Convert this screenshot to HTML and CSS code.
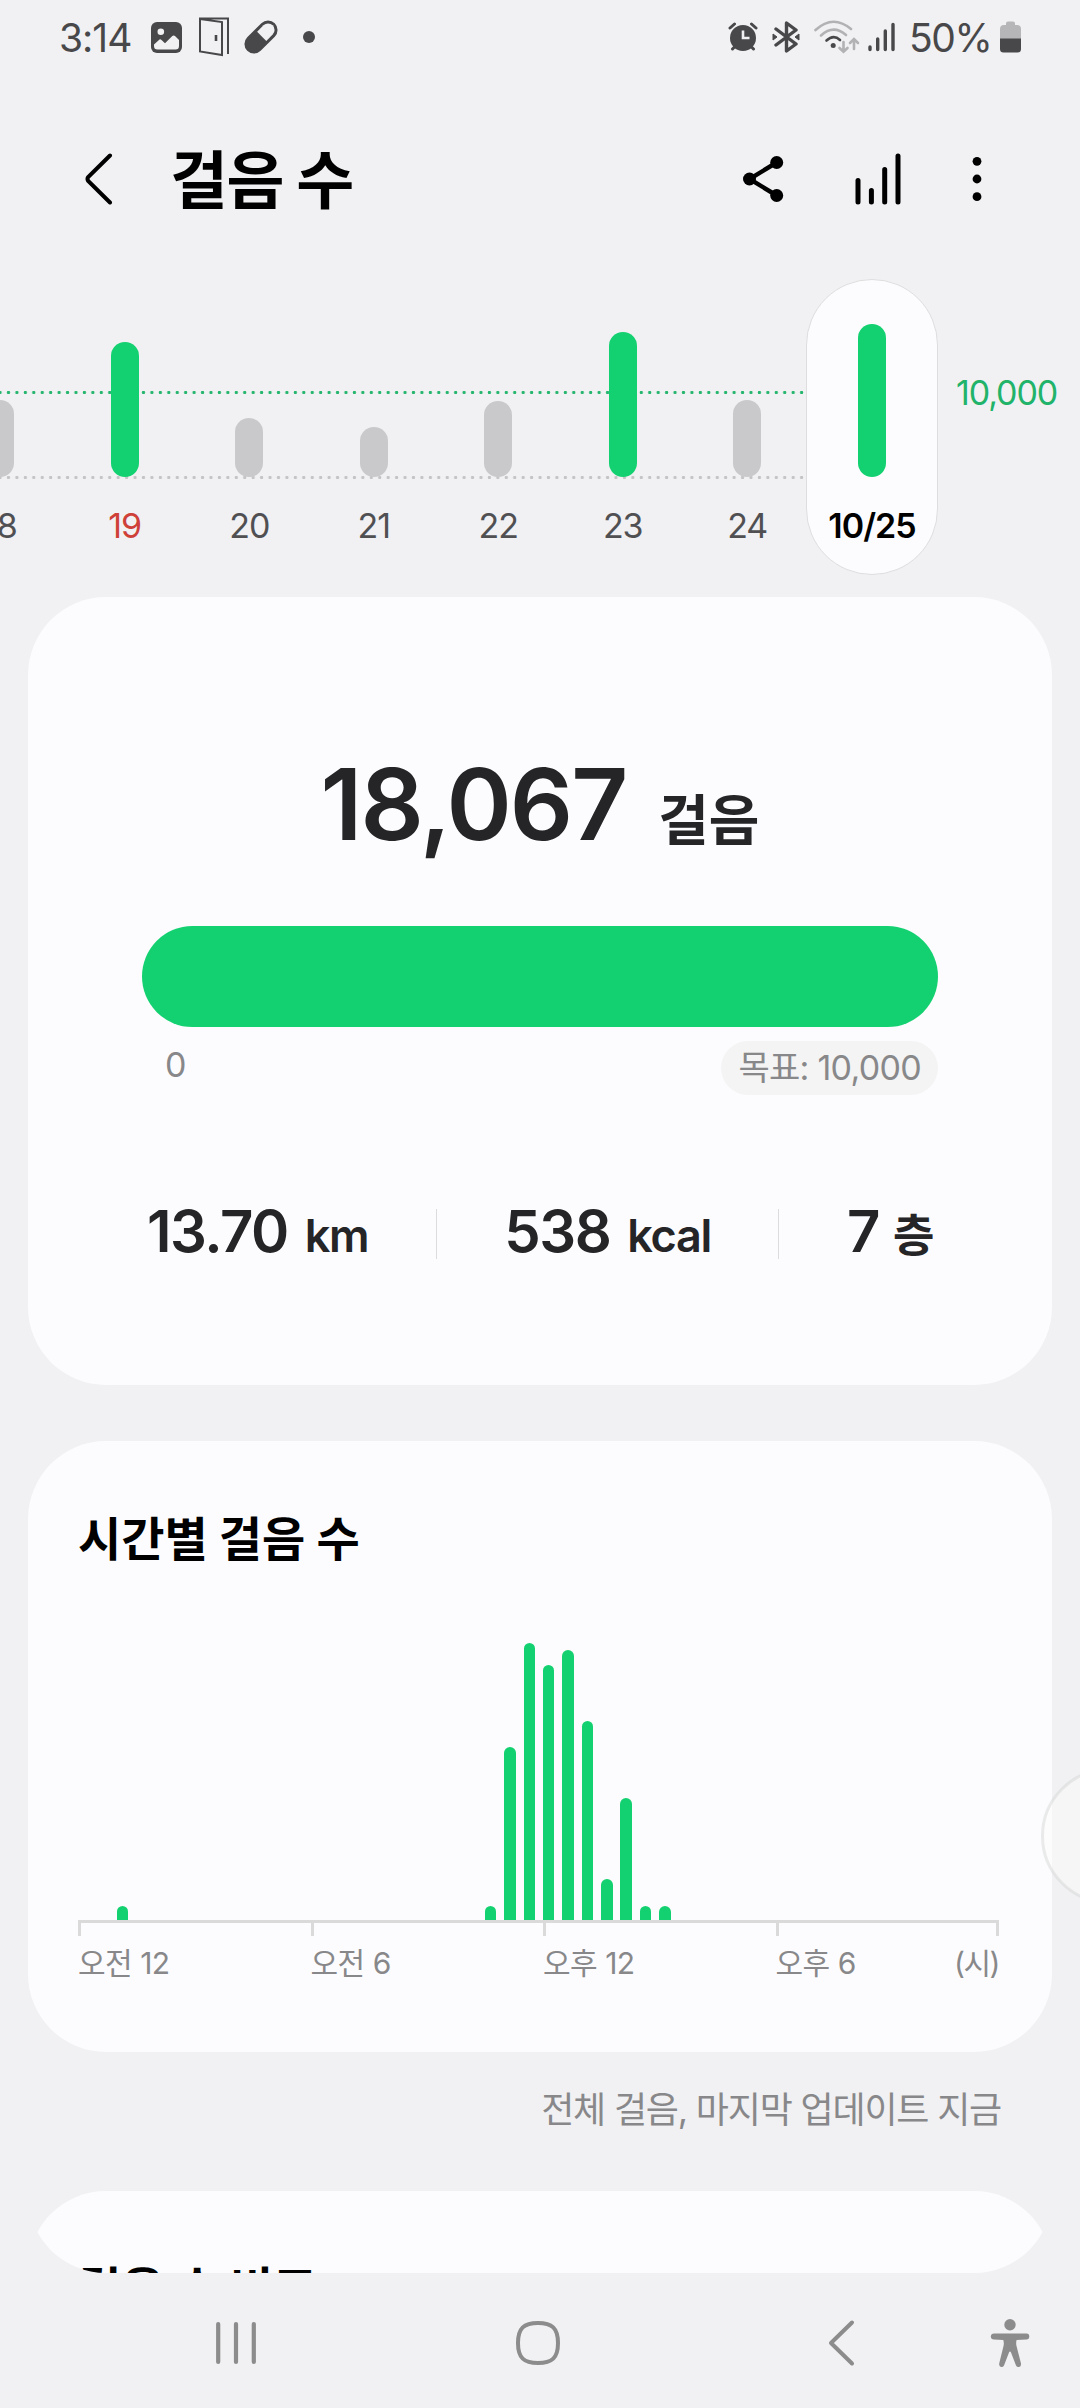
FILE: index.html
```html
<!DOCTYPE html>
<html lang="ko">
<head>
  <meta charset="UTF-8">
  <meta name="viewport" content="width=device-width, initial-scale=1.0">
  <title>걸음 수</title>
  <link rel="stylesheet" href="styles.css">
</head>
<body>
  <div class="status-bar">
    <span class="clock">3:14</span>
    <svg class="icon-image" width="31" height="31" viewBox="0 0 31 31">
      <rect width="31" height="31" rx="6" fill="#48484a"/>
      <circle cx="9.8" cy="9.8" r="3.3" fill="#f1f1f3"/>
      <path d="M3 22.5 L8.5 17.5 Q9.5 17 10.5 18 L14 21.3 L21.3 14 Q22.7 13 24 14 L28 18 V24 Q28 27.5 24.5 27.5 H6.5 Q3 27.5 3 24 Z" fill="#f1f1f3"/>
    </svg>
    <svg class="icon-door" width="30" height="40" viewBox="0 0 30 40" fill="none" stroke="#48484a" stroke-width="2">
      <path d="M29 37 V1.5 H1 V34.5 L23 38 V5 L1 2" />
      <path d="M17 18 V24" stroke-width="2.6"/>
    </svg>
    <svg class="icon-pill" width="36" height="36" viewBox="0 0 36 36">
      <g transform="rotate(-45 18 18)">
        <rect x="-1.5" y="8.5" width="39" height="19" rx="9.5" fill="#48484a"/>
        <path d="M19 11.5 H28 A6.5 6.5 0 0 1 28 24.5 H19 Z" fill="#f1f1f3"/>
      </g>
    </svg>
    <span class="more-dot"></span>

    <div class="status-right">
      <svg width="30" height="30" viewBox="0 0 30 30">
        <circle cx="15" cy="16" r="13" fill="#48484a"/>
        <path d="M2 6 L6.5 2 M28 6 L23.5 2 M4.5 27 L7 24.5 M25.5 27 L23 24.5" stroke="#48484a" stroke-width="3" stroke-linecap="round"/>
        <path d="M15 8.5 V16 H21.5" fill="none" stroke="#f1f1f3" stroke-width="2.6"/>
      </svg>
      <svg class="icon-bluetooth" width="28" height="32" viewBox="0 0 28 32">
        <path d="M4 8 L24 23 L14.5 30 V2 L24 9 L4 24" fill="none" stroke="#48484a" stroke-width="3.4" stroke-linecap="round" stroke-linejoin="round"/>
        <path d="M1 13 L5 16 L1 19 Z M27 13 L23 16 L27 19 Z" fill="#48484a" stroke="#48484a" stroke-linejoin="round"/>
      </svg>
      <svg class="icon-wifi" width="46" height="34" viewBox="0 0 46 34" fill="none" stroke-width="2.6" stroke-linecap="round">
        <path d="M1.5 10 Q19 -6 37 9" stroke="#b2b2b4"/>
        <path d="M7 15.5 Q19.5 4 32 15" stroke="#b2b2b4"/>
        <path d="M12.5 20.5 Q19.5 14 26 20" stroke="#48484a"/>
        <circle cx="19.2" cy="25.5" r="2.5" fill="#48484a"/>
        <path d="M29.5 22 V31 M25.5 28 L29.5 31.7 L33.5 28 M40 29 V19.5 M36 23 L40 19 L44 23" stroke="#b2b2b4"/>
      </svg>
      <svg class="icon-signal" width="28" height="30" viewBox="0 0 28 30" stroke="#48484a" stroke-width="3.4" stroke-linecap="round">
        <path d="M2 25 V27.5 M9.7 17 V27.5 M17.3 9 V27.5 M25 2.5 V27.5"/>
      </svg>
      <span class="battery-text">50%</span>
      <svg class="icon-battery" width="21" height="32" viewBox="0 0 21 32">
        <path d="M6 4 V2.5 Q6 0.5 8 0.5 H13 Q15 0.5 15 2.5 V4 H17 Q21 4 21 8 V18 H0 V8 Q0 4 4 4 Z" fill="#b6b6b8"/>
        <path d="M0 17.5 H21 V28 Q21 31.5 17.5 31.5 H3.5 Q0 31.5 0 28 Z" fill="#48484a"/>
      </svg>
    </div>
  </div>

  <header class="app-bar">
    <svg class="back" width="28" height="54" viewBox="0 0 28 54">
      <path d="M25 3.5 L3.2 25 Q1.8 27 3.2 29 L25 50.5" fill="none" stroke="#000" stroke-width="4" stroke-linecap="round"/>
    </svg>
    <h1>걸음 수</h1>
    <div class="actions">
      <svg width="42" height="54" viewBox="0 0 42 54">
        <path d="M34.7 10.5 L7.5 27 L34.7 43.5" fill="none" stroke="#000" stroke-width="4.4"/>
        <circle cx="7.5" cy="27" r="6.5"/>
        <circle cx="34.7" cy="10.5" r="6.5"/>
        <circle cx="34.7" cy="43.5" r="6.5"/>
      </svg>
      <svg width="48" height="54" viewBox="0 0 48 54" stroke="#000" stroke-width="5" stroke-linecap="round">
        <path d="M4 28.5 V50 M17.4 38.5 V50 M30.7 17.5 V50 M44 4 V50"/>
      </svg>
      <svg width="10" height="54" viewBox="0 0 10 54">
        <circle cx="5" cy="9.3" r="4.4"/>
        <circle cx="5" cy="27" r="4.4"/>
        <circle cx="5" cy="44.7" r="4.4"/>
      </svg>
    </div>
  </header>

  <div class="date-strip">
    <div class="week">
      <div class="day"><div class="track"><span class="bar" style="height: 77px"></span></div><span>18</span></div>
      <div class="day sunday"><div class="track"><span class="bar done" style="height: 135px"></span></div><span>19</span></div>
      <div class="day"><div class="track"><span class="bar" style="height: 59px"></span></div><span>20</span></div>
      <div class="day"><div class="track"><span class="bar" style="height: 50px"></span></div><span>21</span></div>
      <div class="day"><div class="track"><span class="bar" style="height: 76px"></span></div><span>22</span></div>
      <div class="day"><div class="track"><span class="bar done" style="height: 145px"></span></div><span>23</span></div>
      <div class="day"><div class="track"><span class="bar" style="height: 77px"></span></div><span>24</span></div>
    </div>
    <div class="day selected"><div class="track"><span class="bar done" style="height: 153px"></span></div><span>10/25</span></div>
    <span class="goal-line">10,000</span>
  </div>

  <main class="content">
    <section class="card summary">
      <div class="total"><span class="total-number">18,067</span><span class="total-unit">걸음</span></div>
      <div class="progress"></div>
      <div class="progress-labels">
        <span class="zero">0</span>
        <span class="goal">목표: 10,000</span>
      </div>
      <div class="stats">
        <div class="stat">13.70<small>km</small></div>
        <span class="divider"></span>
        <div class="stat">538<small>kcal</small></div>
        <span class="divider"></span>
        <div class="stat">7<small class="floor">층</small></div>
      </div>
    </section>

    <section class="card hourly">
      <h2>시간별 걸음 수</h2>
      <!-- 30분 단위, 48칸 -->
      <div class="chart">
        <span style="grid-column: 3; height: 14px"></span>
        <span style="grid-column: 22; height: 14px"></span>
        <span style="grid-column: 23; height: 173px"></span>
        <span style="grid-column: 24; height: 277px"></span>
        <span style="grid-column: 25; height: 255px"></span>
        <span style="grid-column: 26; height: 270px"></span>
        <span style="grid-column: 27; height: 199px"></span>
        <span style="grid-column: 28; height: 41px"></span>
        <span style="grid-column: 29; height: 122px"></span>
        <span style="grid-column: 30; height: 14px"></span>
        <span style="grid-column: 31; height: 14px"></span>
      </div>
      <div class="axis">
        <span>오전 12</span>
        <span>오전 6</span>
        <span>오후 12</span>
        <span>오후 6</span>
        <span class="hour">(시)</span>
      </div>
    </section>

    <p class="updated">전체 걸음, 마지막 업데이트 지금</p>

    <section class="card compare">
      <h2>걸음 수 비교</h2>
    </section>
  </main>

  <svg class="edge-handle" width="39" height="136" viewBox="0 0 39 136">
    <circle cx="68" cy="68" r="66.5" fill="#fcfcfa" fill-opacity="0.5" stroke="#cdd0cd" stroke-opacity="0.4" stroke-width="3"/>
  </svg>

  <nav class="nav-bar">
    <svg class="recents" width="42" height="50" viewBox="0 0 42 50" stroke="#8c8c8c" stroke-width="4.2" stroke-linecap="round">
      <path d="M3.2 6 V44 M21 6 V44 M38.8 6 V44"/>
    </svg>
    <svg class="home" width="46" height="50" viewBox="0 0 46 50">
      <path d="M23 5 C37 5 43 10 43 25 C43 40 37 45 23 45 C9 45 3 40 3 25 C3 10 9 5 23 5 Z" fill="none" stroke="#8c8c8c" stroke-width="4"/>
    </svg>
    <svg class="nav-back" width="28" height="50" viewBox="0 0 28 50">
      <path d="M25 4.5 L4 25 L25 45.5" fill="none" stroke="#8c8c8c" stroke-width="4" stroke-linecap="round" stroke-linejoin="round"/>
    </svg>
    <svg class="a11y" width="40" height="50" viewBox="0 0 40 50" fill="#8c8c8c">
      <circle cx="20" cy="6.7" r="5.7"/>
      <path d="M4 15.5 H36.5 Q39.3 15.7 39.3 18.5 Q39.2 21.3 36.5 21.5 L26.6 22 Q25.8 25 26.5 28 L31 45.5 Q31.3 48.5 29 49 Q26.8 49.2 26 47.5 L21 34.5 Q20 32.5 19 34.5 L14 47.5 Q13 49.3 11 49 Q8.8 48.5 9.2 45.5 L13.5 28 Q14.2 25 13.3 22 L4 21.5 Q0.9 21.3 0.8 18.5 Q1 15.7 4 15.5 Z"/>
    </svg>
  </nav>
</body>
</html>
```
FILE: styles.css
```css
* {
  box-sizing: border-box;
}

body {
  font-family: Inter, "Noto Sans CJK KR", sans-serif;
  margin: 0;
  width: 1080px;
  height: 2408px;
  display: flex;
  flex-direction: column;
  position: relative;
  overflow: hidden;
  background-color: #f1f1f3;
  color: #252528;
}

svg {
  display: block;
  flex: none;
}

h1, h2, p {
  margin: 0;
}

/* status bar */
.status-bar {
  display: flex;
  align-items: center;
  height: 74px;
  padding: 0 59px;
  color: #48484a;
  font-size: 39px;
}

.clock {
  width: 92px;
  letter-spacing: -1px;
}

.icon-door {
  margin-left: 17px;
}

.icon-pill {
  margin-left: 14px;
}

.more-dot {
  width: 12px;
  height: 12px;
  margin-left: 24px;
  border-radius: 50%;
  background-color: #48484a;
}

.status-right {
  display: flex;
  align-items: center;
  margin-left: auto;
}

.icon-bluetooth {
  margin-left: 14px;
}

.icon-wifi {
  margin-left: 14px;
}

.icon-signal {
  margin-left: 8px;
}

.battery-text {
  width: 90px;
  padding-left: 13px;
  margin-right: 14px;
  letter-spacing: -1.4px;
  white-space: nowrap;
}

/* title */
.app-bar {
  display: flex;
  align-items: center;
  height: 205px;
  padding: 5px 98px 0 85px;
}

.app-bar h1 {
  margin-left: 57px;
  padding-top: 2px;
  color: #000;
  font-size: 63px;
  line-height: 80px;
  font-weight: 700;
  letter-spacing: -1.5px;
}

.actions {
  display: flex;
  gap: 70px;
  margin-left: auto;
}

/* daily strip */
.date-strip {
  display: flex;
  flex: none;
  height: 296px;
}

.week {
  display: flex;
  width: 806px;
  overflow: hidden;
  background-image:
    radial-gradient(circle, #25b56d 1.3px, transparent 2px),
    radial-gradient(circle, #c4c4c6 1.3px, transparent 2px);
  background-size: 8.45px 5px;
  background-position: -4.2px 111px, -4.2px 196px;
  background-repeat: repeat-x;
}

.day {
  display: flex;
  flex: none;
  flex-direction: column;
  align-items: center;
  width: 124.5px;
  color: #505053;
  font-size: 34px;
  line-height: 40px;
  letter-spacing: -1px;
}

.day:first-child {
  margin-left: -62px;
}

.track {
  display: flex;
  align-items: flex-end;
  height: 198px;
  margin-bottom: 29px;
}

.bar {
  width: 28px;
  border-radius: 14px;
  background-color: #c9c9cb;
}

.bar.done {
  background-color: #13d170;
}

.sunday {
  color: #ce4038;
}

.selected {
  width: 132px;
  border: 1px solid #dededf;
  border-radius: 66px;
  background-color: #fcfcfe;
  color: #000;
  font-weight: 600;
}

.selected .track {
  height: 197px;
}

.goal-line {
  margin: 94px 0 0 18px;
  color: #20b369;
  font-size: 34px;
  line-height: 40px;
  letter-spacing: -1.1px;
}

/* scrolling content, rounded at the bottom like the cards */
.content {
  flex: none;
  width: 1024px;
  height: 1676px;
  margin: 22px 28px 0;
  overflow: hidden;
  border-radius: 0 0 78px 78px;
}

.card {
  border-radius: 78px;
  background-color: #fcfcfe;
}

.summary {
  height: 788px;
  padding: 147px 114px 0;
}

.total {
  display: flex;
  justify-content: center;
  align-items: baseline;
  font-weight: 600;
  line-height: 120px;
}

.total-number {
  font-size: 99px;
  letter-spacing: -2px;
}

.total-unit {
  margin-left: 32px;
  font-family: "Noto Sans CJK KR", sans-serif;
  font-size: 55px;
  font-weight: 700;
}

.progress {
  height: 101px;
  margin-top: 50px;
  border-radius: 51px;
  background-color: #13d170;
}

.progress-labels {
  display: flex;
  justify-content: space-between;
  margin-top: 14px;
  color: #88888a;
  font-size: 34px;
}

.zero {
  margin-left: 23px;
  line-height: 48px;
}

.goal {
  padding: 0 17px;
  border-radius: 27px;
  background-color: #f4f4f4;
  line-height: 54px;
  letter-spacing: -0.7px;
}

.stats {
  display: flex;
  justify-content: space-between;
  align-items: center;
  margin: 101px 5px 0;
}

.stat {
  font-size: 58px;
  font-weight: 600;
  line-height: 70px;
  letter-spacing: -1.5px;
}

.stat small {
  margin-left: 17px;
  font-size: 45px;
  letter-spacing: -1.3px;
}

.stat .floor {
  margin-left: 14px;
  font-size: 45px;
  font-weight: 700;
}

.divider {
  width: 1px;
  height: 50px;
  background-color: #dcdcde;
}

/* hourly chart */
.hourly {
  height: 611px;
  margin-top: 56px;
  padding: 65px 53px 0 50px;
}

.card h2 {
  color: #000;
  font-size: 47px;
  font-weight: 700;
  line-height: 66px;
}

.chart {
  display: grid;
  grid-template-columns: repeat(48, 19.38px);
  grid-template-rows: 348px;
  align-items: end;
  justify-items: center;
  margin-left: -4px;
}

.chart span {
  width: 11.5px;
  border-radius: 6px 6px 0 0;
  background-color: #13d170;
}

.axis {
  display: grid;
  grid-template-columns: 232.5px 232.5px 232.5px 1fr auto;
  border-top: 3px solid #dadada;
  color: #88888a;
  font-size: 30px;
  line-height: 40px;
  letter-spacing: -0.5px;
}

.axis span {
  white-space: nowrap;
}

.axis span::before {
  content: "";
  display: block;
  width: 3px;
  height: 13px;
  margin-bottom: 7px;
  background-color: #dadada;
}

.axis .hour {
  letter-spacing: -1.5px;
}

.axis .hour::before {
  margin-left: auto;
}

.updated {
  margin: 32px 51px 0 0;
  color: #88888a;
  font-size: 36px;
  line-height: 52px;
  letter-spacing: -1.2px;
  text-align: right;
}

.compare {
  height: 300px;
  margin-top: 55px;
  padding: 65px 50px 0;
}

.edge-handle {
  position: absolute;
  top: 1768px;
  right: 0;
}

/* system navigation */
.nav-bar {
  display: flex;
  align-items: center;
  height: 135px;
  padding: 5px 50px 0 215px;
}

.home {
  margin-left: 258px;
}

.nav-back {
  margin-left: 266px;
}

.a11y {
  margin-left: auto;
}
```
